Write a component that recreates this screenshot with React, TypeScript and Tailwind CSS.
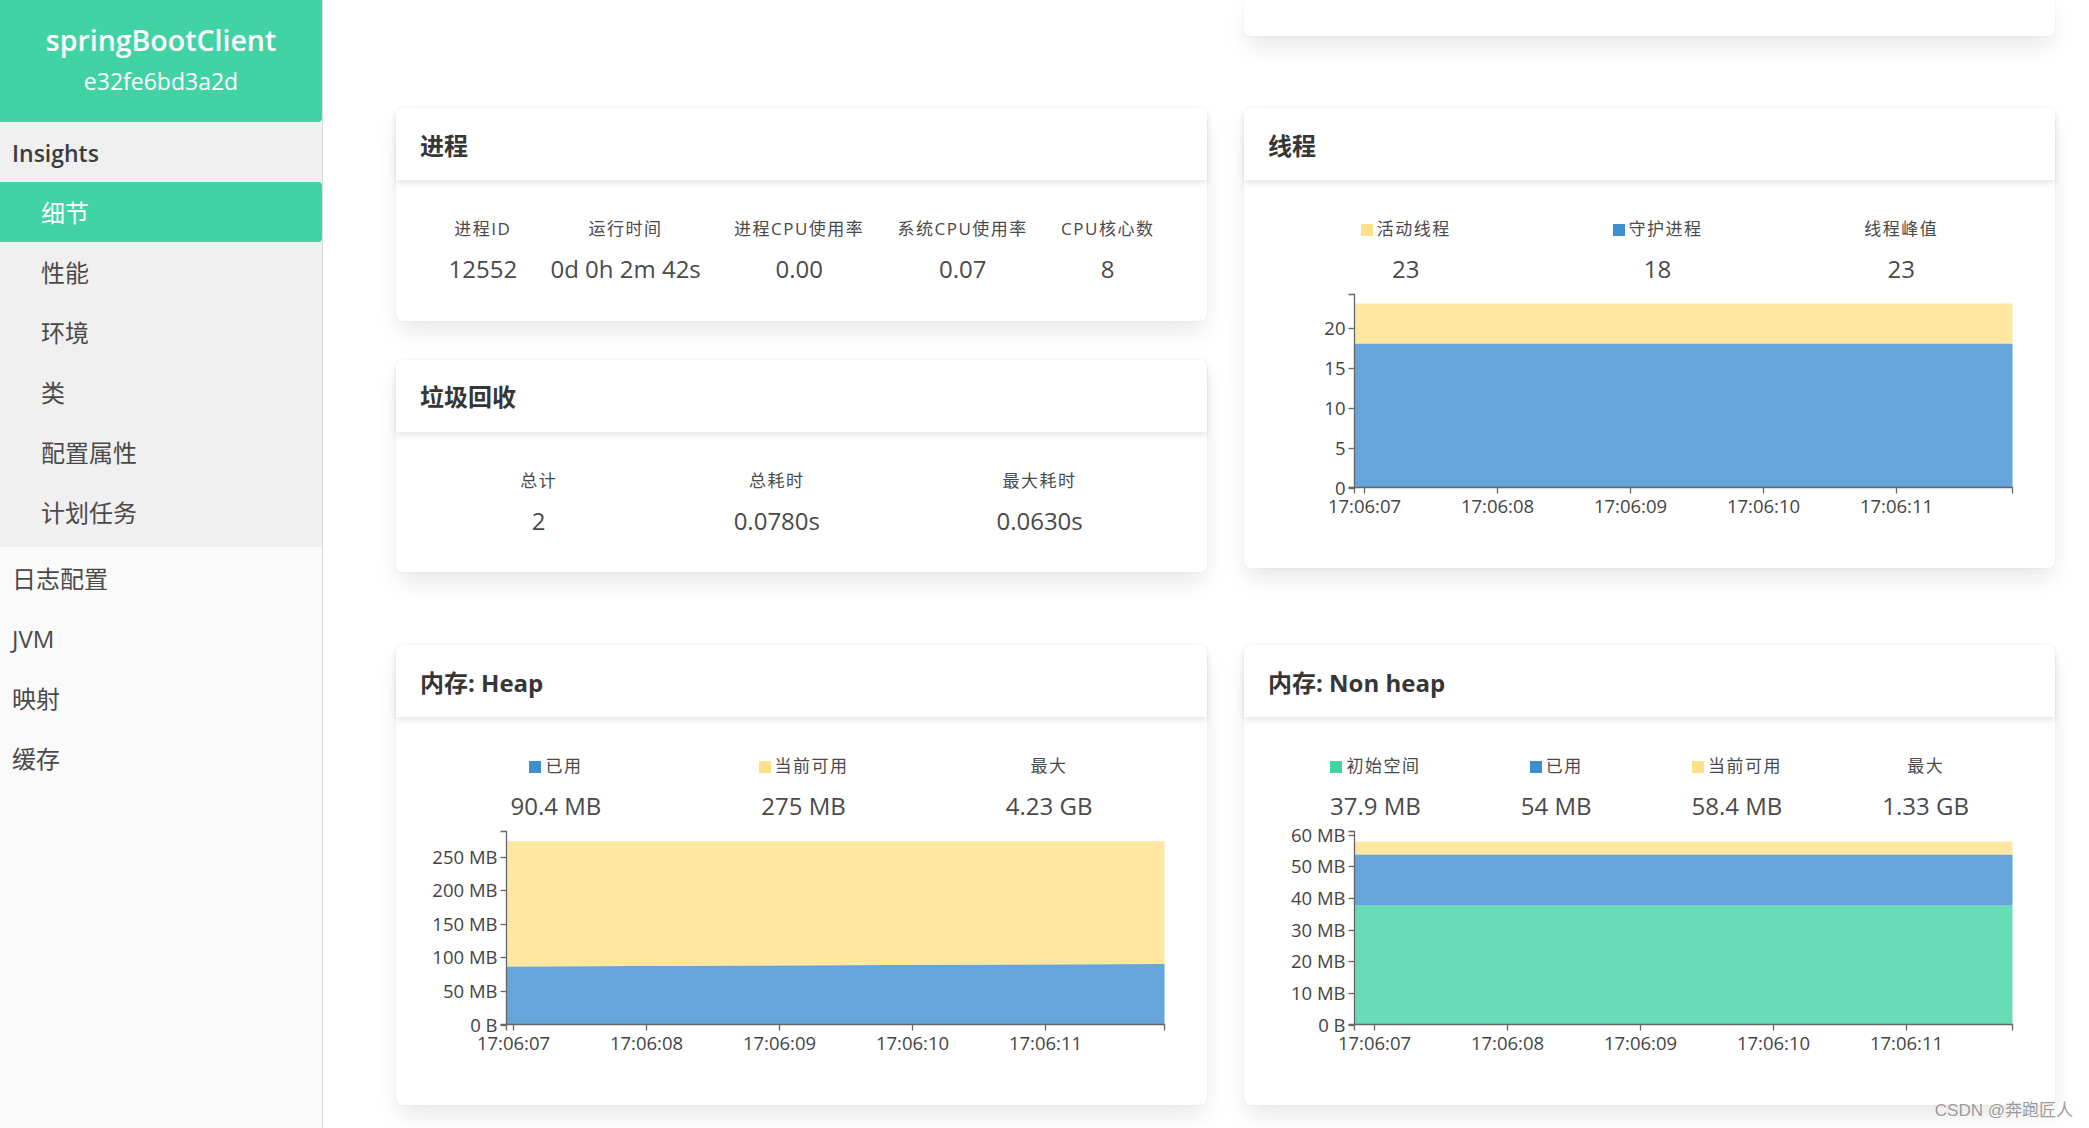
import React from "react";

type Item = { label: string; value: string; bullet?: string };

function Level({ items }: { items: Item[] }) {
  return (
    <div className="flex -mb-[2.5px]">
      {items.map((it) => (
        <div key={it.label} className="grow text-center">
          <div className="flex items-center justify-center text-[17px] leading-[25px] tracking-[1.5px] mb-[10px] text-[#4a4a4a]">
            {it.bullet ? <span className={`inline-block w-[12px] h-[12px] mr-[4px] mt-[2px] ${it.bullet}`} /> : null}
            <span>{it.label}</span>
          </div>
          <div className="text-[24px] leading-[36px] text-[#4a4a4a]">{it.value}</div>
        </div>
      ))}
    </div>
  );
}

function Card({ title, children }: { title: string; children: React.ReactNode }) {
  return (
    <div className="bg-white rounded-[7px] shadow-[0_12px_24px_-3px_rgba(10,10,10,0.1),0_0_0_1px_rgba(10,10,10,0.02)]">
      <div className="relative h-[72px] flex items-center px-[24px] pt-[3px] rounded-t-[7px] shadow-[0_3px_6px_rgba(10,10,10,0.1)]">
        <span className="text-[24px] font-bold text-[#363636] leading-[36px]">{title}</span>
      </div>
      <div className="p-[36px]">{children}</div>
    </div>
  );
}

type Area = { color: string; botL: number; botR: number; topL: number; topR: number };

function Chart({
  yMax,
  yTicks,
  areas,
  tickStart,
}: {
  yMax: number;
  yTicks: { v: number; label: string }[];
  areas: Area[];
  tickStart: number;
}) {
  const x0 = 74.5;
  const x1 = 732.5;
  const y0 = 202.5;
  const yT = 9.5;
  const ys = (v: number) => y0 - (v / yMax) * (y0 - yT);
  const labels = ["17:06:07", "17:06:08", "17:06:09", "17:06:10", "17:06:11"];
  const axis = "#666666";
  return (
    <svg width="739" height="247" className="block" style={{ overflow: "hidden" }}>
      {areas.map((a, i) => (
        <polygon
          key={i}
          points={`${x0},${ys(a.topL)} ${x1},${ys(a.topR)} ${x1},${ys(a.botR)} ${x0},${ys(a.botL)}`}
          fill={a.color}
          fillOpacity={0.8}
        />
      ))}
      <path d={`M${x0 - 6},${yT} H${x0} V${y0} H${x0 - 6}`} stroke={axis} fill="none" strokeWidth={1.3} />
      {yTicks.map((t) => {
        const y = Math.round(ys(t.v)) + 0.5;
        return (
          <g key={t.label}>
            <line x1={x0 - 6} x2={x0} y1={y} y2={y} stroke={axis} strokeWidth={1.3} />
            <text
              x={x0 - 9}
              y={y}
              dy="0.34em"
              textAnchor="end"
              fontSize="18.5"
              fill="#444444"
              fontFamily="'Open Sans','Noto Sans CJK SC',sans-serif"
            >
              {t.label}
            </text>
          </g>
        );
      })}
      <path d={`M${x0},${y0 + 6} V${y0} H${x1} V${y0 + 6}`} stroke={axis} fill="none" strokeWidth={1.3} />
      {labels.map((l, i) => {
        const x = tickStart + i * 133 + 0.5;
        return (
          <g key={l}>
            <line x1={x} x2={x} y1={y0} y2={y0 + 6} stroke={axis} strokeWidth={1.3} />
            <text
              x={x}
              y={y0 + 25}
              textAnchor="middle"
              fontSize="18.5"
              fill="#444444"
              fontFamily="'Open Sans','Noto Sans CJK SC',sans-serif"
            >
              {l}
            </text>
          </g>
        );
      })}
    </svg>
  );
}

const GREEN = "#42d3a5";
const BLUE = "#3e8ed0";
const YELLOW = "#ffe08a";

function Sidebar() {
  const sub = ["细节", "性能", "环境", "类", "配置属性", "计划任务"];
  const top = ["日志配置", "JVM", "映射", "缓存"];
  return (
    <aside className="w-[323px] shrink-0 bg-[#fafafa] border-r border-[#dcdcdc] h-[1128px]">
      <div className="h-[122px] bg-[#42d3a5] rounded-br-[4px] flex flex-col items-center pt-[21px] text-white">
        <div className="text-[28.5px] font-semibold leading-[38px]">springBootClient</div>
        <div className="text-[23px] leading-[33px] mt-[6px]">e32fe6bd3a2d</div>
      </div>
      <div className="bg-[#f0f0f0] pb-[5px]">
        <div className="h-[60px] flex items-center pl-[12px] pt-[2px] text-[23px] font-semibold text-[#3d3d3d]">Insights</div>
        {sub.map((s, i) => (
          <div
            key={s}
            className={
              i === 0
                ? "h-[60px] flex items-center pl-[41px] pt-[2px] text-[24px] text-white bg-[#42d3a5] rounded-r-[4px]"
                : "h-[60px] flex items-center pl-[41px] pt-[2px] text-[24px] text-[#4a4a4a]"
            }
          >
            {s}
          </div>
        ))}
      </div>
      <div className="pt-[2px]">
        {top.map((s) => (
          <div key={s} className="h-[60px] flex items-center pl-[12px] text-[24px] text-[#4a4a4a]">
            {s}
          </div>
        ))}
      </div>
    </aside>
  );
}

export default function App() {
  return (
    <div className="flex h-[1128px] w-[2089px] overflow-hidden bg-white font-['Open_Sans','Noto_Sans_CJK_SC',sans-serif] text-[#4a4a4a]">
      <Sidebar />
      <main className="relative flex-1 bg-white pl-[73px] pr-[34px]">
        <div className="grid grid-cols-2 gap-x-[37px]">
          <div />
          <div className="h-[36px] bg-white rounded-b-[7px] shadow-[0_12px_24px_-3px_rgba(10,10,10,0.1),0_0_0_1px_rgba(10,10,10,0.02)]" />
        </div>
        <div className="grid grid-cols-2 gap-x-[37px] mt-[72px] items-start">
          <div className="flex flex-col gap-[39px]">
            <Card title="进程">
              <Level
                items={[
                  { label: "进程ID", value: "12552" },
                  { label: "运行时间", value: "0d 0h 2m 42s" },
                  { label: "进程CPU使用率", value: "0.00" },
                  { label: "系统CPU使用率", value: "0.07" },
                  { label: "CPU核心数", value: "8" },
                ]}
              />
            </Card>
            <Card title="垃圾回收">
              <Level
                items={[
                  { label: "总计", value: "2" },
                  { label: "总耗时", value: "0.0780s" },
                  { label: "最大耗时", value: "0.0630s" },
                ]}
              />
            </Card>
          </div>
          <Card title="线程">
            <Level
              items={[
                { label: "活动线程", value: "23", bullet: "bg-[#ffe08a]" },
                { label: "守护进程", value: "18", bullet: "bg-[#3e8ed0]" },
                { label: "线程峰值", value: "23" },
              ]}
            />
            <Chart
              yMax={24.125}
              tickStart={84}
              yTicks={[0, 5, 10, 15, 20].map((v) => ({ v, label: String(v) }))}
              areas={[
                { color: BLUE, botL: 0, botR: 0, topL: 18, topR: 18 },
                { color: YELLOW, botL: 18, botR: 18, topL: 23, topR: 23 },
              ]}
            />
          </Card>
        </div>
        <div className="grid grid-cols-2 gap-x-[37px] mt-[73px] items-start">
          <Card title="内存: Heap">
            <Level
              items={[
                { label: "已用", value: "90.4 MB", bullet: "bg-[#3e8ed0]" },
                { label: "当前可用", value: "275 MB", bullet: "bg-[#ffe08a]" },
                { label: "最大", value: "4.23 GB" },
              ]}
            />
            <Chart
              yMax={288}
              tickStart={81}
              yTicks={[0, 50, 100, 150, 200, 250].map((v) => ({ v, label: v === 0 ? "0 B" : `${v} MB` }))}
              areas={[
                { color: BLUE, botL: 0, botR: 0, topL: 86.5, topR: 90.3 },
                { color: YELLOW, botL: 86.5, botR: 90.3, topL: 273.5, topR: 273.5 },
              ]}
            />
          </Card>
          <Card title="内存: Non heap">
            <Level
              items={[
                { label: "初始空间", value: "37.9 MB", bullet: "bg-[#42d3a5]" },
                { label: "已用", value: "54 MB", bullet: "bg-[#3e8ed0]" },
                { label: "当前可用", value: "58.4 MB", bullet: "bg-[#ffe08a]" },
                { label: "最大", value: "1.33 GB" },
              ]}
            />
            <Chart
              yMax={60.95}
              tickStart={94}
              yTicks={[0, 10, 20, 30, 40, 50, 60].map((v) => ({ v, label: v === 0 ? "0 B" : `${v} MB` }))}
              areas={[
                { color: GREEN, botL: 0, botR: 0, topL: 37.6, topR: 37.6 },
                { color: BLUE, botL: 37.6, botR: 37.6, topL: 53.7, topR: 53.7 },
                { color: YELLOW, botL: 53.7, botR: 53.7, topL: 57.8, topR: 57.8 },
              ]}
            />
          </Card>
        </div>
        <div className="absolute right-[16px] bottom-[6px] text-[17px] leading-[22px] text-[#9a9a9a] font-['Liberation_Sans','Noto_Sans_CJK_SC',sans-serif] [text-shadow:0_0_2px_#fff]">
          CSDN @奔跑匠人
        </div>
      </main>
    </div>
  );
}
